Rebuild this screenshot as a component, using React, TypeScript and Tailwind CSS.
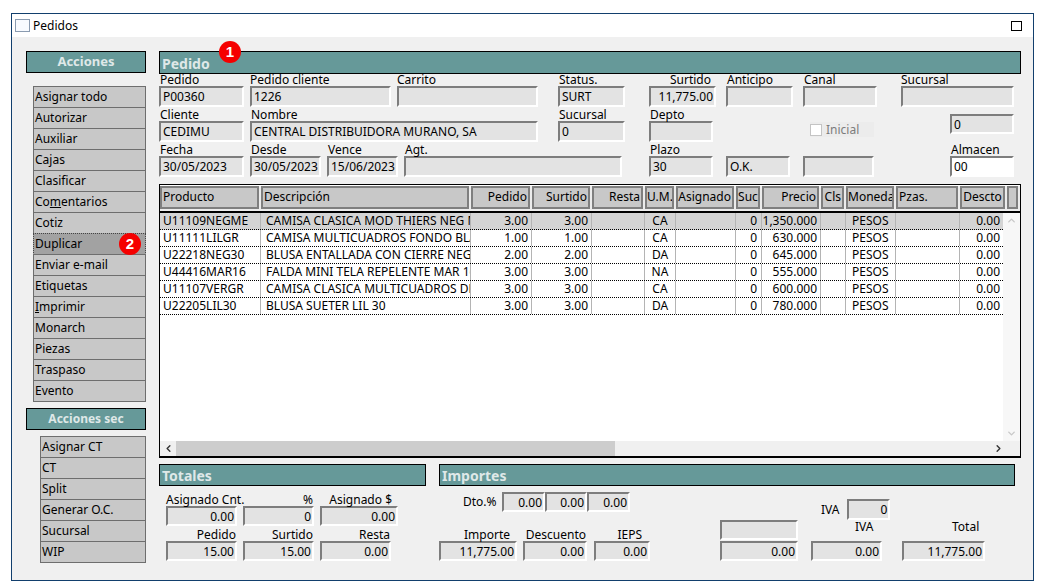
import { ChevronDown, ChevronLeft, ChevronRight, ChevronUp } from 'lucide-react';

const acciones = ['Asignar todo', 'Autorizar', 'Auxiliar', 'Cajas', 'Clasificar', 'Comentarios', 'Cotiz', 'Duplicar', 'Enviar e-mail', 'Etiquetas', 'Imprimir', 'Monarch', 'Piezas', 'Traspaso', 'Evento'];
const accionesSec = ['Asignar CT', 'CT', 'Split', 'Generar O.C.', 'Sucursal', 'WIP'];

const gridCols = 'grid grid-cols-[101px_210px_61px_60px_53px_31px_60px_26px_59px_25px_50px_64px_43px]';
const headCols = 'grid grid-cols-[101px_210px_61px_60px_53px_31px_60px_26px_59px_25px_50px_64px_47px_13px]';

const headers = [
  { t: 'Producto' },
  { t: 'Descripción' },
  { t: 'Pedido', r: true },
  { t: 'Surtido', r: true },
  { t: 'Resta', r: true },
  { t: 'U.M.', c: true },
  { t: 'Asignado', r: true },
  { t: 'Suc', c: true },
  { t: 'Precio', r: true },
  { t: 'Cls', r: true },
  { t: 'Moneda', c: true },
  { t: 'Pzas.' },
  { t: 'Descto', c: true },
  { t: '' },
];

const rows = [
  ['U11109NEGME', 'CAMISA CLASICA MOD THIERS NEG ME', '3.00', '3.00', 'CA', '1,350.000'],
  ['U11111LILGR', 'CAMISA MULTICUADROS FONDO BLANCO', '1.00', '1.00', 'CA', '630.000'],
  ['U22218NEG30', 'BLUSA ENTALLADA CON CIERRE NEG 30', '2.00', '2.00', 'DA', '645.000'],
  ['U44416MAR16', 'FALDA MINI TELA REPELENTE MAR 16', '3.00', '3.00', 'NA', '555.000'],
  ['U11107VERGR', 'CAMISA CLASICA MULTICUADROS DE ALGODON', '3.00', '3.00', 'CA', '600.000'],
  ['U22205LIL30', 'BLUSA SUETER LIL 30', '3.00', '3.00', 'DA', '780.000'],
];

function Badge({ n, className }: { n: number; className: string }) {
  return (
    <span className={`absolute z-10 w-[22px] h-[22px] rounded-full bg-[#f50000] text-white font-['Liberation_Sans',sans-serif] font-bold text-[15px] leading-[22px] text-center ${className}`}>
      {n}
    </span>
  );
}

function Bar({ title, className = '' }: { title: string; className?: string }) {
  return (
    <div className={`bg-[#669999] border border-black flex items-center font-bold text-[#dfe8e8] ${className}`}>
      {title}
    </div>
  );
}

function ActionButton({ label }: { label: string }) {
  const active = label === 'Duplicar';
  let text: React.ReactNode = label;
  if (label === 'Comentarios') text = <>Co<span className="underline">m</span>entarios</>;
  if (label === 'Imprimir') text = <><span className="underline">I</span>mprimir</>;
  return (
    <div className={`relative h-[22px] -mb-px border border-[#6e6e6e] pl-[1px] leading-[20px] text-black ${active ? 'bg-[#a2a2a2] border-dotted border-[#444]' : 'bg-[#c8c8c8]'}`}>
      {text}
      {active && <Badge n={2} className="left-[85px] top-[-1px]" />}
    </div>
  );
}

function Box({ value = '', right, white, className = '' }: { value?: string; right?: boolean; white?: boolean; className?: string }) {
  return (
    <div
      className={`border-t-2 border-l-2 border-t-[#7d7d7d] border-l-[#7d7d7d] border-r-2 border-b-2 border-r-white border-b-white leading-[17px] overflow-hidden whitespace-nowrap text-black ${right ? 'text-right pr-[1px]' : 'pl-[2px]'} ${white ? 'bg-white' : 'bg-[#e3e3e3]'} ${className}`}
    >
      {value}
    </div>
  );
}

function Field({ label, value, right, white, className = '', boxClass = 'h-[21px]', labelClass = 'pl-px' }: { label: string; value?: string; right?: boolean; white?: boolean; className?: string; boxClass?: string; labelClass?: string }) {
  return (
    <div className={`shrink-0 ${className}`}>
      <div className={`h-[13px] leading-[13px] whitespace-nowrap ${labelClass}`}>{label}</div>
      <Box value={value} right={right} white={white} className={boxClass} />
    </div>
  );
}

export default function App() {
  return (
    <div className="w-[1043px] h-[588px] bg-white pt-[13px] pl-[11px] overflow-hidden font-['Noto_Sans',sans-serif] text-[12px] text-black">
      <div className="w-[1023px] h-[568px] border border-[#123f6d] flex flex-col">
        {/* title bar */}
        <div className="h-[23px] flex items-center pl-[3px] pr-[11px] bg-white">
          <div className="w-[15px] h-[13px] border border-[#8a9bb0] bg-[#f8fbff]" />
          <span className="ml-[3px]">Pedidos</span>
          <div className="ml-auto w-[11px] h-[10px] border border-black" />
        </div>

        <div className="flex-1 bg-[#f0f0f0] flex pl-[14px] pt-[14px]">
          {/* left column */}
          <div className="w-[120px] shrink-0">
            <Bar title="Acciones" className="h-[22px] justify-center text-[13px]" />
            <div className="ml-[7px] mt-[13px]">
              {acciones.map((a) => <ActionButton key={a} label={a} />)}
            </div>
            <Bar title="Acciones sec" className="h-[22px] justify-center mt-[7px]" />
            <div className="ml-[14px] mt-[6px]">
              {accionesSec.map((a) => <ActionButton key={a} label={a} />)}
            </div>
          </div>

          {/* main column */}
          <div className="ml-[13px] w-[862px]">
            <div className="relative">
              <Bar title="Pedido" className="h-[23px] pl-[2px] text-[14px] pt-[2px] -mb-px" />
              <Badge n={1} className="left-[60px] top-[-10px]" />
            </div>

            <div className="flex">
              <Field label="Pedido" value="P00360" className="w-[85px]" />
              <Field label="Pedido cliente" value="1226" className="w-[141px] ml-[6px]" labelClass="" />
              <Field label="Carrito" className="w-[141px] ml-[6px]" labelClass="" />
              <Field label="Status." value="SURT" className="w-[67px] ml-[20px]" />
              <Field label="Surtido" value="11,775.00" right className="w-[67px] ml-[24px]" labelClass="text-right pr-[5px]" />
              <Field label="Anticipo" className="w-[67px] ml-[10px]" />
              <Field label="Canal" className="w-[74px] ml-[10px]" />
              <Field label="Sucursal" className="w-[113px] ml-[24px]" labelClass="" />
            </div>

            <div className="flex mt-px">
              <Field label="Cliente" value="CEDIMU" className="w-[85px]" />
              <Field label="Nombre" value="CENTRAL DISTRIBUIDORA MURANO, SA" className="w-[288px] ml-[6px]" />
              <Field label="Sucursal" value="0" className="w-[67px] ml-[20px]" />
              <Field label="Depto" className="w-[64px] ml-[24px]" />
              <div className="w-[64px] h-[15px] ml-[97px] mt-[14px] bg-[#ececec] flex items-center shrink-0 text-[#7c7c7c]">
                <span className="w-[12px] h-[12px] border border-[#c4c4c4] bg-white" />
                <span className="ml-[4px]">Inicial</span>
              </div>
              <Box value="0" className="w-[64px] h-[20px] ml-[76px] mt-[6px] shrink-0" />
            </div>

            <div className="flex mt-px">
              <Field label="Fecha" value="30/05/2023" className="w-[85px]" />
              <Field label="Desde" value="30/05/2023" className="w-[71px] ml-[6px]" />
              <Field label="Vence" value="15/06/2023" className="w-[71px] ml-[6px]" />
              <Field label="Agt." className="w-[218px] ml-[6px]" />
              <Field label="Plazo" value="30" className="w-[64px] ml-[27px]" />
              <Field label="" value="O.K." className="w-[64px] ml-[13px]" />
              <Field label="" className="w-[71px] ml-[13px]" />
              <Field label="Almacen" value="00" white className="w-[64px] ml-[76px]" />
            </div>

            {/* grid */}
            <div className="mt-[7px] h-[274px] border border-b-2 border-black pt-px flex flex-col bg-white">
              <div className={`${headCols} h-[27px] border-b-2 border-black bg-[#ececec] shrink-0`}>
                {headers.map((h, i) => (
                  <div
                    key={i}
                    className={`h-[23px] mr-[2px] border-2 border-[#7f7f7f] bg-[#c8c8c8] leading-[18px] whitespace-nowrap overflow-hidden ${h.r ? 'text-right pr-[1px]' : h.c ? 'text-center' : 'pl-[1px]'}`}
                  >
                    {h.t}
                  </div>
                ))}
              </div>
              <div className="flex h-[228px] shrink-0">
                <div className="w-[843px]">
                  {rows.map((r, i) => (
                    <div key={r[0]} className={`${gridCols} h-[17px] border-b border-dotted border-black leading-[16px] ${i === 0 ? 'bg-[#d4d4d4]' : ''}`}>
                      <div className="pl-[3px] border-r border-[#b4b4b4]">{r[0]}</div>
                      <div className="pl-[5px] border-r border-[#b4b4b4] overflow-hidden whitespace-nowrap">{r[1]}</div>
                      <div className="text-right pr-[3px] border-r border-[#b4b4b4]">{r[2]}</div>
                      <div className="text-right pr-[3px] border-r border-[#b4b4b4]">{r[3]}</div>
                      <div className="border-r border-[#b4b4b4]" />
                      <div className="text-center border-r border-[#b4b4b4]">{r[4]}</div>
                      <div className="border-r border-[#b4b4b4]" />
                      <div className="text-right pr-[4px] border-r border-[#b4b4b4]">0</div>
                      <div className="text-right pr-[3px] border-r border-[#b4b4b4]">{r[5]}</div>
                      <div className="border-r border-[#b4b4b4]" />
                      <div className="pl-[6px] border-r border-[#b4b4b4]">PESOS</div>
                      <div className="border-r border-[#b4b4b4]" />
                      <div className="text-right pr-[3px]">0.00</div>
                    </div>
                  ))}
                </div>
                <div className="w-[17px] bg-[#f7f7f7] flex flex-col items-center justify-between py-[2px] text-[#c8c8c8]">
                  <ChevronUp size={11} strokeWidth={3} />
                  <ChevronDown size={11} strokeWidth={3} />
                </div>
              </div>
              <div className="h-[15px] bg-[#f0f0f0] flex items-center shrink-0">
                <div className="w-[16px] flex justify-center text-[#333]"><ChevronLeft size={11} strokeWidth={3} /></div>
                <div className="w-[439px] h-[15px] bg-[#cdcdcd]" />
                <div className="ml-auto w-[17px] mr-[13px] flex justify-center text-[#333]"><ChevronRight size={11} strokeWidth={3} /></div>
              </div>
            </div>

            {/* totals */}
            <div className="flex mt-[6px]">
              <div className="w-[267px] shrink-0">
                <Bar title="Totales" className="h-[22px] pl-[2px] text-[14px]" />
                <div className="flex pl-[7px] mt-[7px]">
                  <Field label="Asignado Cnt." value="0.00" right className="w-[71px]" boxClass="h-[20px]" labelClass="" />
                  <Field label="%" value="0" right className="w-[71px] ml-[6px]" boxClass="h-[20px]" labelClass="text-right pr-px" />
                  <Field label="Asignado $" value="0.00" right className="w-[78px] ml-[6px]" boxClass="h-[20px]" labelClass="text-right pr-[6px]" />
                </div>
                <div className="flex pl-[7px] mt-[2px]">
                  <Field label="Pedido" value="15.00" right className="w-[71px]" boxClass="h-[20px]" labelClass="text-right pr-px" />
                  <Field label="Surtido" value="15.00" right className="w-[71px] ml-[6px]" boxClass="h-[20px]" labelClass="text-right pr-px" />
                  <Field label="Resta" value="0.00" right className="w-[71px] ml-[6px]" boxClass="h-[20px]" labelClass="text-right pr-px" />
                </div>
              </div>

              <div className="w-[576px] ml-[13px] shrink-0">
                <Bar title="Importes" className="h-[22px] pl-[2px] text-[14px]" />
                <div className="flex">
                  <div className="w-[211px] shrink-0">
                    <div className="flex items-center pl-[24px] mt-[6px]">
                      <span className="w-[39px] shrink-0">Dto.%</span>
                      <Box value="0.00" right className="w-[43px] h-[20px] shrink-0" />
                      <Box value="0.00" right className="w-[42px] h-[20px] shrink-0" />
                      <Box value="0.00" right className="w-[43px] h-[20px] shrink-0" />
                    </div>
                    <div className="flex mt-[16px]">
                      <Field label="Importe" value="11,775.00" right className="w-[78px]" boxClass="h-[20px]" labelClass="text-right pr-[7px]" />
                      <Field label="Descuento" value="0.00" right className="w-[64px] ml-[6px]" boxClass="h-[20px]" labelClass="text-right pr-[1px]" />
                      <Field label="IEPS" value="0.00" right className="w-[56px] ml-[7px]" boxClass="h-[20px]" labelClass="text-right pr-[8px]" />
                    </div>
                  </div>
                  <div className="ml-[70px] w-[265px] shrink-0">
                    <div className="flex items-center h-[21px] mt-[13px]">
                      <span className="ml-[101px]">IVA</span>
                      <Box value="0" right className="w-[43px] h-[21px] ml-[8px] shrink-0" />
                    </div>
                    <div className="flex h-[21px]">
                      <Box className="w-[78px] h-[20px] shrink-0" />
                      <span className="w-[71px] ml-[13px] pl-[44px] leading-[14px]">IVA</span>
                      <span className="w-[83px] ml-[20px] pl-[50px] leading-[14px]">Total</span>
                    </div>
                    <div className="flex">
                      <Box value="0.00" right className="w-[78px] h-[20px] shrink-0" />
                      <Box value="0.00" right className="w-[71px] h-[20px] ml-[13px] shrink-0" />
                      <Box value="11,775.00" right className="w-[83px] h-[20px] ml-[20px] shrink-0" />
                    </div>
                  </div>
                </div>
              </div>
            </div>
          </div>
        </div>
      </div>
    </div>
  );
}
